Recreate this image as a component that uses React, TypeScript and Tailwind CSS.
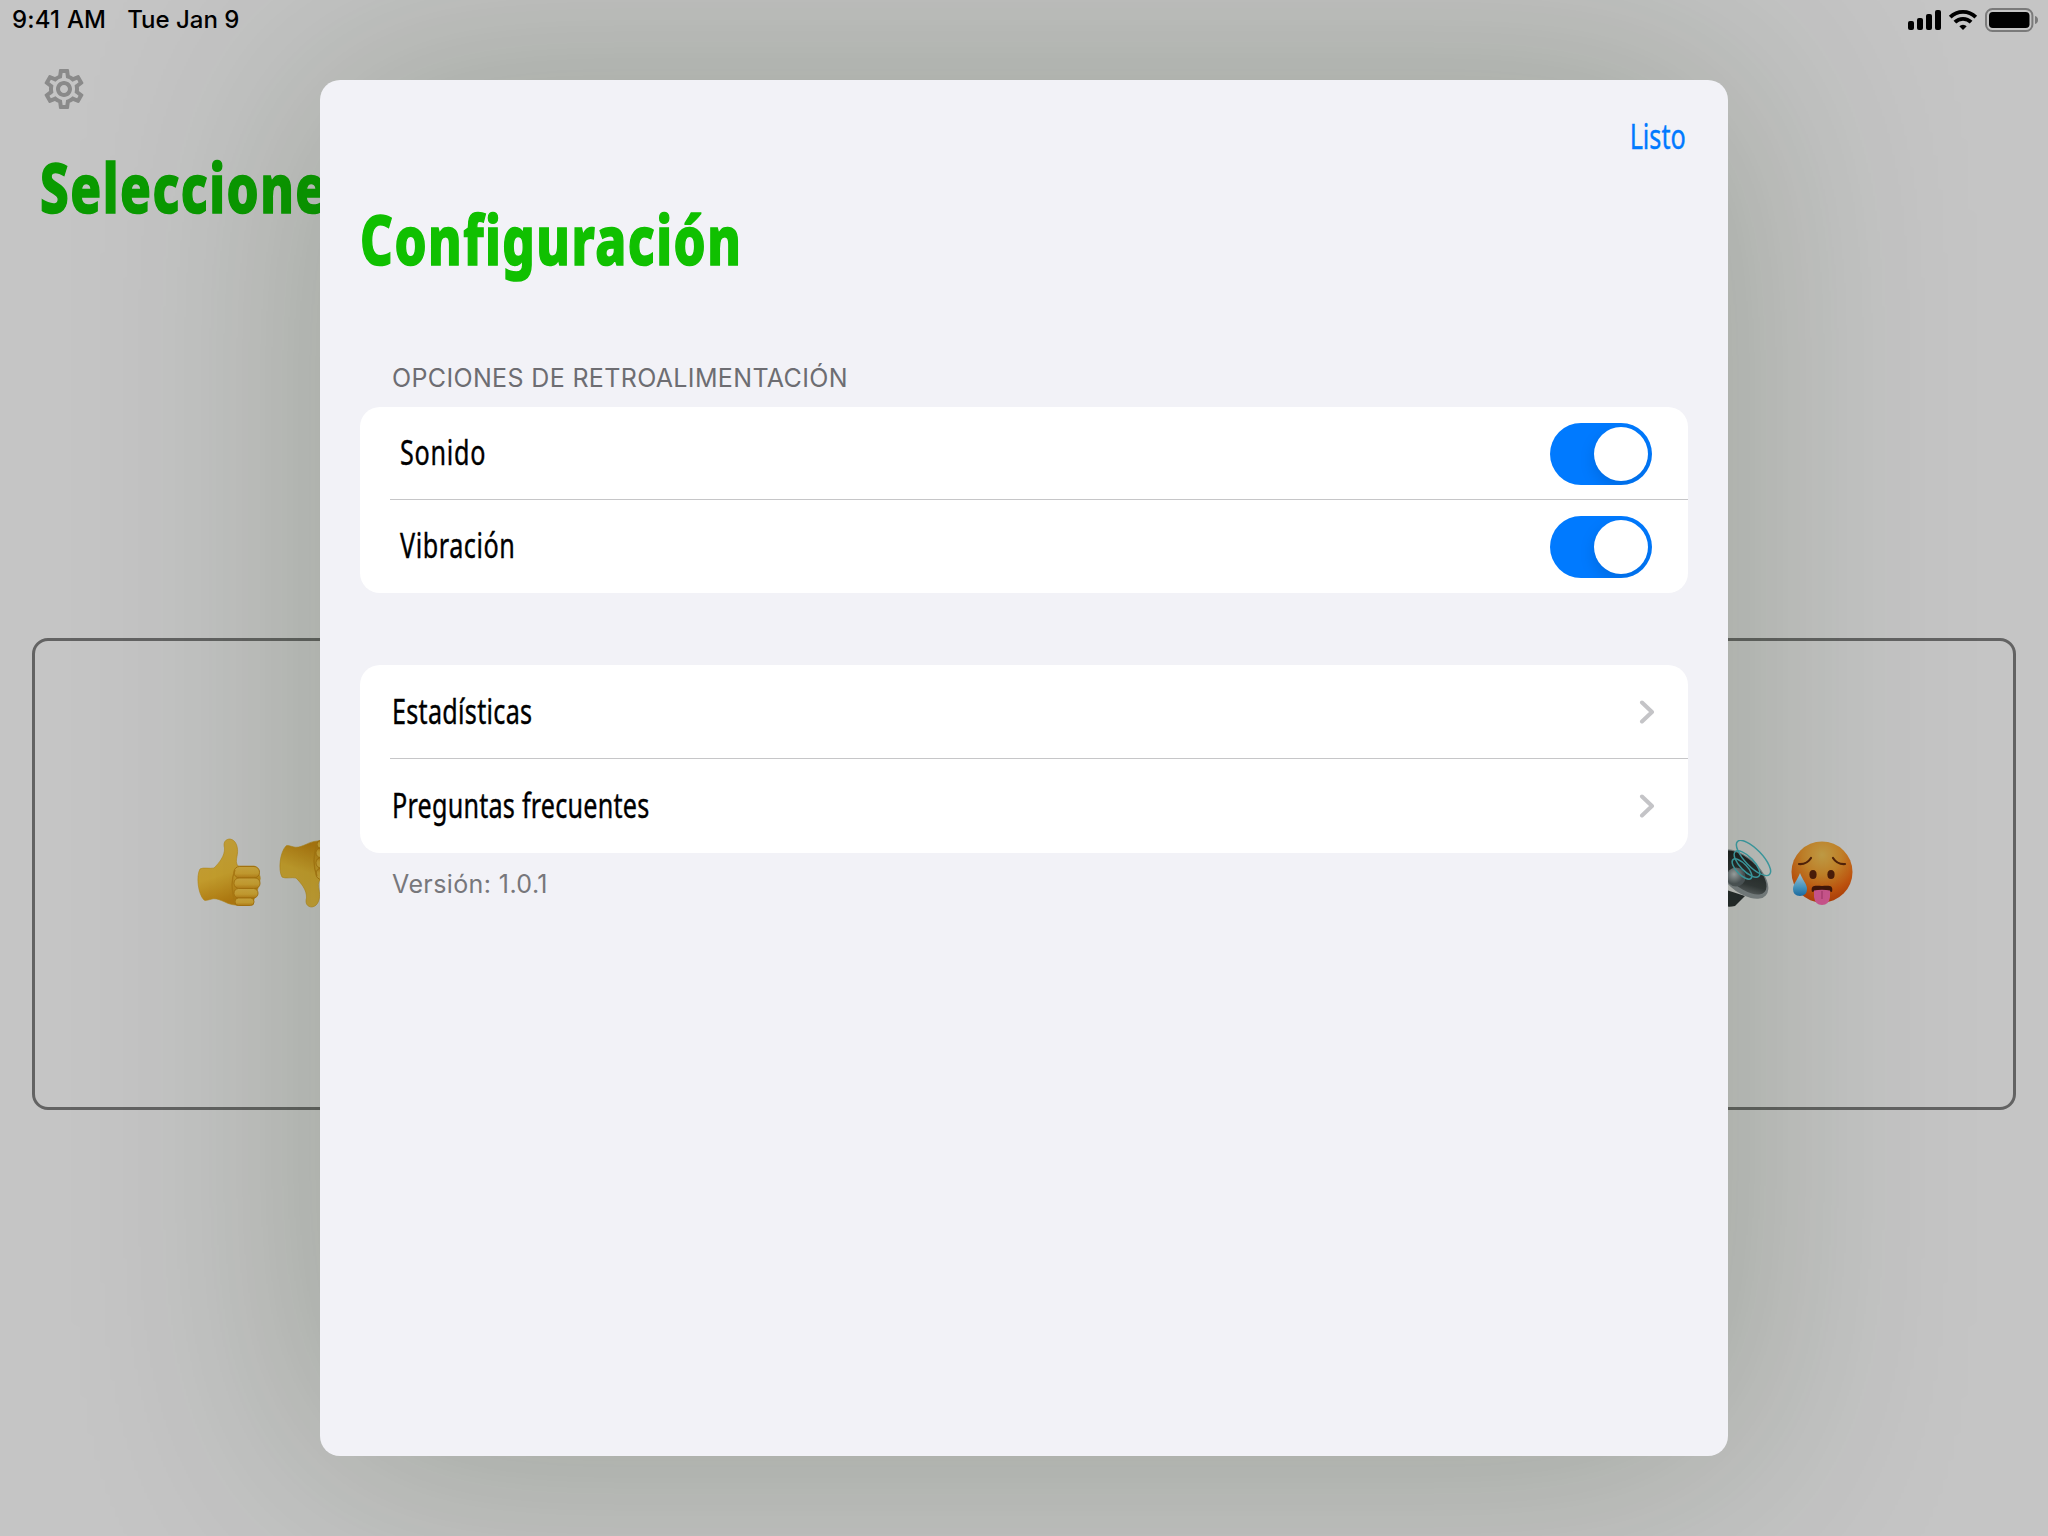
import React from "react";
import { MdOutlineSettings } from "react-icons/md";

function StatusBar() {
  return (
    <div className="flex h-10 items-center justify-between pl-3 pr-[10px] font-['Inter',sans-serif] text-[24px] leading-10 text-black">
      <div className="flex gap-[21px] font-medium">
        <span className="tracking-[0.2px]">9:41 AM</span>
        <span>Tue Jan 9</span>
      </div>
      <svg width="130" height="40" viewBox="0 0 130 40">
        <rect x="0" y="21" width="6" height="9" rx="2" />
        <rect x="9" y="18" width="6" height="12" rx="2" />
        <rect x="18" y="14" width="6" height="16" rx="2" />
        <rect x="27" y="10" width="6" height="20" rx="2" />
        <g fill="none" stroke="#000" strokeWidth="3.8">
          <path d="M42.2 17.2a18.2 18.2 0 0 1 25.6 0" />
          <path d="M46.9 22.2a11.4 11.4 0 0 1 16.2 0" />
        </g>
        <path d="M51.3 26.2a5.3 5.3 0 0 1 7.400 0L55 30z" />
        <rect x="78" y="9" width="46.4" height="22" rx="6.5" fill="none" stroke="#7a7a7a" strokeWidth="2" />
        <rect x="81" y="12" width="40.5" height="16" rx="3.8" />
        <path d="M127 16c2 .5 3 2 3 4s-1 3.500-3 4z" fill="#7a7a7a" />
      </svg>
    </div>
  );
}

function Thumb() {
  return (
    <svg width="64" height="70" viewBox="0 0 64 70">
      <defs>
        <linearGradient id="skin" x1="0" y1="0" x2="0.3" y2="1">
          <stop offset="0" stopColor="#c9a33c" />
          <stop offset="0.6" stopColor="#c9a02e" />
          <stop offset="1" stopColor="#b47a10" />
        </linearGradient>
        <linearGradient id="finger" x1="0" y1="0" x2="0" y2="1">
          <stop offset="0" stopColor="#cfa840" />
          <stop offset="0.6" stopColor="#cba032" />
          <stop offset="1" stopColor="#b87f18" />
        </linearGradient>
      </defs>
      <path
        d="M3 31C6 29 13 31 17 30C22 25 28 18 27.500 10C26 5 28 1 33 1C40 2 41 11 40.500 15C40 20 38 24 41 28L57 28Q63 30 62 36Q65 41 61 46Q62 52 58 55Q58 66 51 67C42 68 33 67 28 64C23 62 19 60 15 61C11 62 8 63 7 62C1 56-1 38 3 31Z"
        fill="url(#skin)"
        stroke="#b58818"
        strokeWidth="0.6"
      />
      <g fill="url(#finger)" stroke="#a8730d" strokeWidth="0.9">
        <rect x="37" y="28.500" width="25.500" height="11.500" rx="5.500" />
        <rect x="37" y="40" width="26" height="10.500" rx="5" />
        <rect x="37" y="50.500" width="24" height="9.500" rx="4.500" />
        <rect x="38" y="60" width="19" height="7.500" rx="3.500" />
      </g>
      <path d="M38 32Q32 46 38 65" fill="none" stroke="#b07c14" strokeWidth="1.300" />
    </svg>
  );
}

function Speaker() {
  return (
    <svg width="64" height="68" viewBox="0 0 64 68">
      <defs>
        <linearGradient id="metal" x1="0" y1="0" x2="1" y2="1">
          <stop offset="0" stopColor="#16181a" />
          <stop offset="0.7" stopColor="#34383b" />
          <stop offset="1" stopColor="#777b80" />
        </linearGradient>
        <radialGradient id="dome" cx="0.4" cy="0.35">
          <stop offset="0" stopColor="#a5aaae" />
          <stop offset="1" stopColor="#50565c" />
        </radialGradient>
      </defs>
      <path d="M0 44L37 56L27 66Q18 68 12 64Z" fill="#25292c" />
      <ellipse cx="34" cy="34" rx="32" ry="17" transform="rotate(42 34 34)" fill="#7c8186" />
      <ellipse cx="35" cy="32.500" rx="29" ry="14" transform="rotate(42 35 32.500)" fill="url(#metal)" />
      <circle cx="28" cy="37" r="9.500" fill="url(#dome)" />
      <g fill="none" stroke="#3fa0aa" strokeWidth="1.500">
        <ellipse cx="45.500" cy="18" rx="23" ry="8.500" transform="rotate(46 45.500 18)" />
        <ellipse cx="39" cy="24" rx="17" ry="7" transform="rotate(46 39 24)" />
        <ellipse cx="34" cy="29" rx="13" ry="5.500" transform="rotate(46 34 29)" />
      </g>
    </svg>
  );
}

function HotFace() {
  return (
    <svg width="64" height="66" viewBox="0 0 64 66">
      <defs>
        <radialGradient id="face" cx="0.5" cy="0.22" r="0.8">
          <stop offset="0" stopColor="#c8a048" />
          <stop offset="0.4" stopColor="#c8842a" />
          <stop offset="0.75" stopColor="#c4550f" />
          <stop offset="1" stopColor="#b03c08" />
        </radialGradient>
        <linearGradient id="drop" x1="0" y1="0" x2="0" y2="1">
          <stop offset="0" stopColor="#b4cede" />
          <stop offset="0.6" stopColor="#4b9cc9" />
          <stop offset="1" stopColor="#1c6eab" />
        </linearGradient>
      </defs>
      <circle cx="32" cy="32" r="30.500" fill="url(#face)" />
      <g fill="none" stroke="#54230a" strokeWidth="2.200" strokeLinecap="round">
        <path d="M9 24Q17 24.500 21 18" />
        <path d="M55 24Q47 24.500 43 18" />
      </g>
      <ellipse cx="23" cy="34.500" rx="3.600" ry="4.500" fill="#4d1c0a" />
      <ellipse cx="41" cy="34.500" rx="3.600" ry="4.500" fill="#4d1c0a" />
      <path d="M22 52C20 44 27 46 32 46C37 46 44 44 42 52Q32 48 22 52Z" fill="#42150a" />
      <path d="M24 50.500Q32 49 40 50.500V57Q39 65 32 65Q25 65 24 57Z" fill="#cf5590" />
      <path d="M32 51V59" stroke="#a93a70" strokeWidth="1.200" />
      <path d="M10 33C12 39 17 44 17 49Q17 56 10 56Q3 56 3 49C3 44 8 39 10 33Z" fill="url(#drop)" />
    </svg>
  );
}

function Toggle() {
  return (
    <div className="flex h-[62px] w-[102px] items-center justify-end overflow-hidden rounded-full bg-[#007aff] p-1">
      <div className="size-[54px] rounded-full bg-white shadow-[0_6px_16px_rgba(0,0,0,0.13)]" />
    </div>
  );
}

function Chevron() {
  return (
    <svg width="16" height="24" viewBox="0 0 16 24" fill="none" stroke="#c4c4c7" strokeWidth="4" strokeLinecap="round" strokeLinejoin="round">
      <path d="M3 2.500L13 12L3 21.500" />
    </svg>
  );
}

const rowText =
  "origin-left scale-x-[0.74] font-['Noto_Sans',sans-serif] text-[34px] leading-[44px] text-black [font-variant-ligatures:none] [-webkit-text-stroke:0.4px_black]";
const titleText =
  "w-max origin-left scale-x-[0.75] font-['Noto_Sans',sans-serif] text-[68px] font-extrabold leading-[80px] tracking-[2px] [font-variant-ligatures:none] [-webkit-text-stroke:1.6px_currentColor]";

function Settings() {
  return (
    <section className="absolute left-[320px] top-20 flex h-[1376px] w-[1408px] flex-col rounded-[20px] bg-[#f2f2f7] px-10 shadow-[0_0_240px_8px_rgba(17,43,0,0.225)]">
      <div className="flex h-[111px] shrink-0 items-center justify-end pr-[2px]">
        <span className="origin-right scale-x-[0.74] font-['Noto_Sans',sans-serif] text-[34px] leading-[44px] text-[#007aff] [-webkit-text-stroke:0.4px_#007aff]">Listo</span>
      </div>
      <h1 className={`${titleText} mt-[8px] text-[#10c000]`}>Configuración</h1>
      <p className="ml-8 mt-[83px] h-[45px] font-['Inter',sans-serif] text-[25px] leading-[32px] tracking-[0.35px] text-[#6d6d72]">
        OPCIONES DE RETROALIMENTACIÓN
      </p>
      <div className="flex h-[186px] shrink-0 flex-col rounded-[20px] bg-white">
        <div className="flex h-[92px] items-center justify-between pl-[40px] pr-9 pt-[2px]">
          <span className={`${rowText} pb-[5px] tracking-[1px]`}>Sonido</span>
          <Toggle />
        </div>
        <div className="ml-[30px] h-px bg-[#c6c6c8]" />
        <div className="flex h-[93px] items-center justify-between pl-[40px] pr-9">
          <span className={`${rowText} pb-[3px] tracking-[0.75px]`}>Vibración</span>
          <Toggle />
        </div>
      </div>
      <div className="mt-[72px] flex h-[188px] shrink-0 flex-col rounded-[20px] bg-white">
        <div className="flex h-[93px] items-center justify-between pl-8 pr-[33px]">
          <span className={`${rowText} pb-[2px] tracking-[0.37px]`}>Estadísticas</span>
          <Chevron />
        </div>
        <div className="ml-[30px] h-px bg-[#c6c6c8]" />
        <div className="flex h-[94px] items-center justify-between pl-8 pr-[33px]">
          <span className={`${rowText} pb-[3px] tracking-[0.3px]`}>Preguntas frecuentes</span>
          <Chevron />
        </div>
      </div>
      <p className="ml-8 mt-[15px] font-['Inter',sans-serif] text-[25px] leading-[32px] tracking-[0.4px] text-[#77777b]">Versión: 1.0.1</p>
    </section>
  );
}

export default function App() {
  return (
    <main className="relative h-[1536px] w-[2048px] overflow-hidden bg-[#c5c5c5]">
      <StatusBar />
      <div className="ml-10 mt-[25px]">
        <MdOutlineSettings size={48} color="#8a8a8a" />
      </div>
      <h1 className={`${titleText} ml-10 mt-[34px] text-[#0a9b00]`}>Seleccione</h1>
      <div className="mx-8 mt-[411px] flex h-[472px] items-center justify-between rounded-[16px] border-[3px] border-[#636363] pl-[162px] pr-[159px]">
        <div className="flex gap-[18px] pb-[3px]">
          <Thumb />
          <div className="rotate-180 -scale-x-100">
            <Thumb />
          </div>
        </div>
        <div className="flex gap-[18px] pb-px">
          <Speaker />
          <HotFace />
        </div>
      </div>
      <Settings />
    </main>
  );
}
